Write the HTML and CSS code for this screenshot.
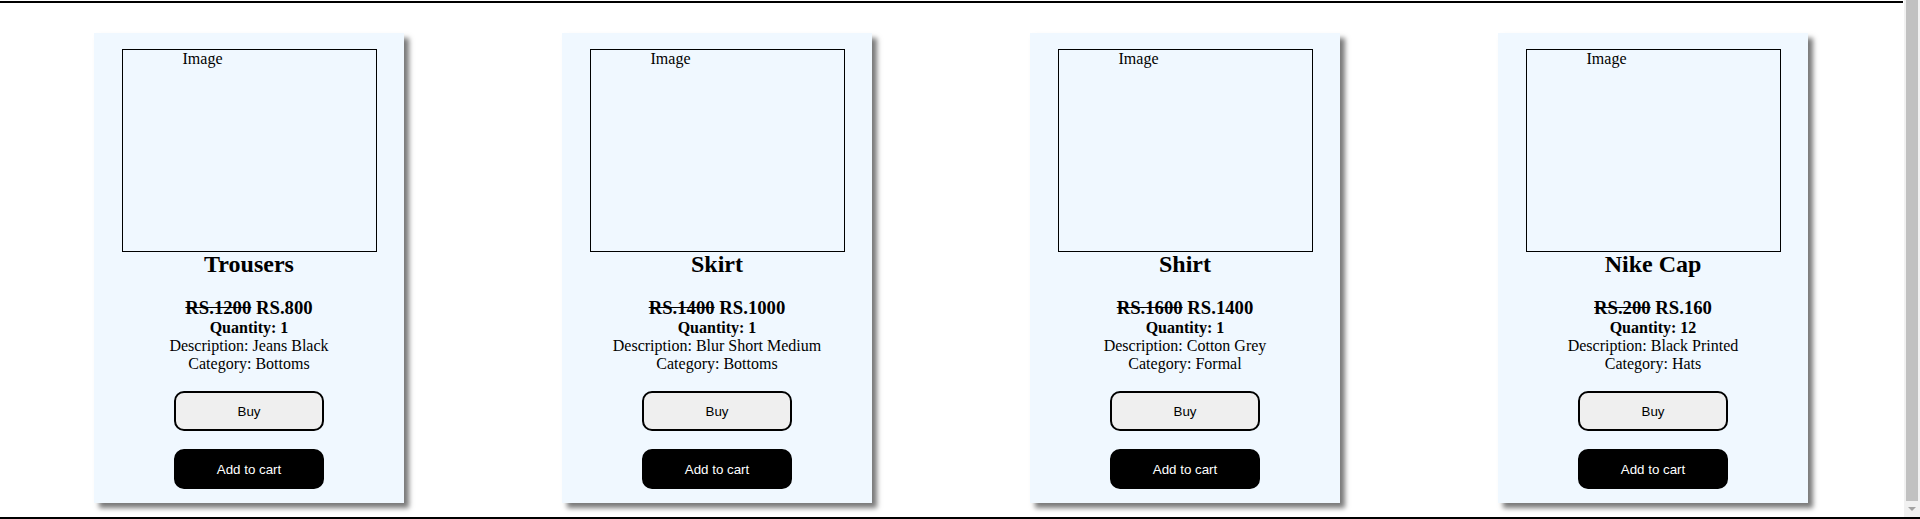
FILE: index.html
```html
<!DOCTYPE html>
<html lang="en">
<head>
<meta charset="utf-8">
<title>Products</title>
<link rel="stylesheet" href="styles.css">
</head>
<body>
<div class="frame">
  <main class="page">
    <div class="topline"></div>
    <section class="products">
      <article class="card">
        <div class="image">Image</div>
        <h2 class="title">Trousers</h2>
        <h3 class="price"><s>RS.1200</s> RS.800</h3>
        <p class="qty">Quantity: 1</p>
        <p class="info">Description: Jeans Black</p>
        <p class="info">Category: Bottoms</p>
        <button class="btn btn-buy">Buy</button>
        <button class="btn btn-cart">Add to cart</button>
      </article>
      <article class="card">
        <div class="image">Image</div>
        <h2 class="title">Skirt</h2>
        <h3 class="price"><s>RS.1400</s> RS.1000</h3>
        <p class="qty">Quantity: 1</p>
        <p class="info">Description: Blur Short Medium</p>
        <p class="info">Category: Bottoms</p>
        <button class="btn btn-buy">Buy</button>
        <button class="btn btn-cart">Add to cart</button>
      </article>
      <article class="card">
        <div class="image">Image</div>
        <h2 class="title">Shirt</h2>
        <h3 class="price"><s>RS.1600</s> RS.1400</h3>
        <p class="qty">Quantity: 1</p>
        <p class="info">Description: Cotton Grey</p>
        <p class="info">Category: Formal</p>
        <button class="btn btn-buy">Buy</button>
        <button class="btn btn-cart">Add to cart</button>
      </article>
      <article class="card">
        <div class="image">Image</div>
        <h2 class="title">Nike Cap</h2>
        <h3 class="price"><s>RS.200</s> RS.160</h3>
        <p class="qty">Quantity: 12</p>
        <p class="info">Description: Black Printed</p>
        <p class="info">Category: Hats</p>
        <button class="btn btn-buy">Buy</button>
        <button class="btn btn-cart">Add to cart</button>
      </article>
    </section>
  </main>
  <div class="scrollbar">
    <div class="thumb"></div>
    <div class="arrow"><span class="tri"></span></div>
  </div>
</div>
<div class="bottomline"></div>
</body>
</html>
```
FILE: styles.css
```css
* { box-sizing: border-box; }

html, body {
  margin: 0;
  padding: 0;
  background: #ffffff;
}

body {
  font-family: "Liberation Serif", "Times New Roman", serif;
  color: #000;
  overflow: hidden;
}

.frame {
  display: flex;
  height: 517px;
}

.page {
  flex: 1;
  min-width: 0;
}

.topline {
  height: 2px;
  margin-top: 1px;
  margin-right: 1px;
  background: #000;
}

.products {
  display: grid;
  grid-template-columns: repeat(4, 1fr);
  justify-items: center;
  padding: 0 17px 0 15px;
  margin-top: 30px;
}

.card {
  width: 310px;
  height: 470px;
  background: #f0f8ff;
  box-shadow: 5px 5px 5px #7a7a7a;
  padding: 16px 0 14px;
  display: flex;
  flex-direction: column;
  align-items: center;
  text-align: center;
}

.image {
  width: 255px;
  height: 203px;
  flex: none;
  border: 1px solid #000;
  padding-left: 60px;
  font-size: 16px;
  line-height: 18px;
  text-align: left;
}

.title {
  margin: 0;
  font-size: 24px;
  line-height: 25px;
  font-weight: bold;
}

.price {
  margin: 21px 0 0;
  font-size: 18.72px;
  line-height: 20px;
  font-weight: bold;
}

.qty {
  margin: 1px 0 0;
  font-size: 16px;
  line-height: 18px;
  font-weight: bold;
}

.info {
  margin: 0;
  font-size: 16px;
  line-height: 18px;
}

.btn {
  width: 150px;
  height: 40px;
  flex: none;
  border: 2px solid #000;
  border-radius: 10px;
  font-family: "Liberation Sans", Arial, sans-serif;
  font-size: 13.33px;
  padding: 0;
}

.btn-buy {
  margin-top: 18px;
  background: #efefef;
  color: #000;
}

.btn-cart {
  margin-top: 18px;
  background: #000;
  color: #fff;
}

.scrollbar {
  width: 16px;
  background: #f1f1f1;
  display: flex;
  flex-direction: column;
}

.thumb {
  flex: 1;
  margin: 0 2px;
  background: #c1c1c1;
}

.arrow {
  height: 16px;
  display: flex;
  align-items: center;
  justify-content: center;
}

.tri {
  width: 0;
  height: 0;
  border-left: 4px solid transparent;
  border-right: 4px solid transparent;
  border-top: 4px solid #a3a3a3;
}

.bottomline {
  height: 2px;
  background: #000;
}
```
